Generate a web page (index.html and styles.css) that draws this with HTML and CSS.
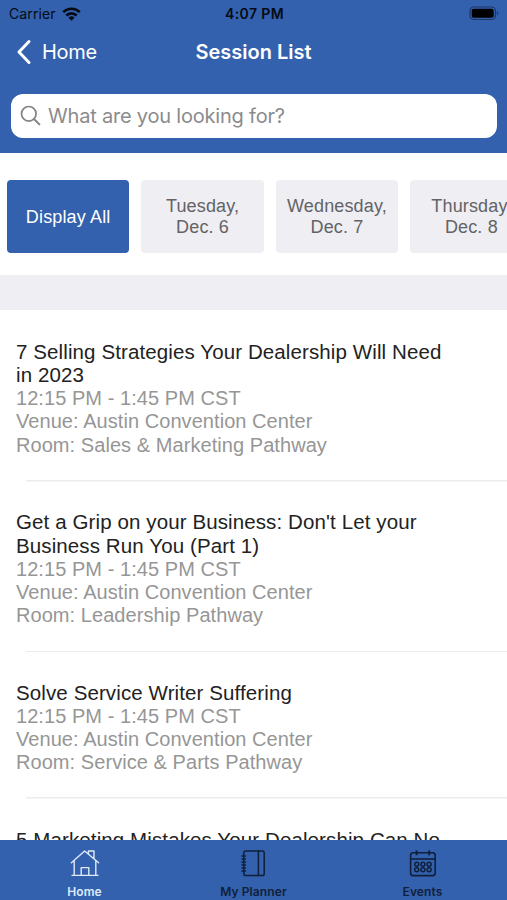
FILE: index.html
```html
<!DOCTYPE html>
<html lang="en">
<head>
    <meta charset="UTF-8">
    <meta name="viewport" content="width=device-width, initial-scale=1.0">
    <title>Session List</title>
    <link rel="stylesheet" href="styles.css">
</head>
<body>
    <div class="app">
        <header class="header">
            <div class="status-bar">
                <div class="carrier">
                    <span class="carrier-name">Carrier</span>
                    <svg class="wifi" width="19" height="14" viewBox="0 0 19 14">
                        <g fill="none" stroke="#050a14" stroke-width="2.6">
                            <path d="M1.2 5.2a11.8 11.8 0 0 1 16.6 0"/>
                            <path d="M4.3 8.5a7.4 7.4 0 0 1 10.4 0"/>
                        </g>
                        <path d="M9.5 13.8l-3-3.1a4.3 4.3 0 0 1 6 0z" fill="#050a14"/>
                    </svg>
                </div>
                <span class="time">4:07 PM</span>
                <svg class="battery" width="31" height="15" viewBox="0 0 31 15">
                    <rect x="1" y="1" width="25.5" height="12.5" rx="3.8" fill="none" stroke="#1c3765" stroke-width="1.2"/>
                    <rect x="2.7" y="2.7" width="22" height="9" rx="2" fill="#000"/>
                    <path d="M28.2 5.2v4c1.6-.5 1.6-3.5 0-4z" fill="#1c3765"/>
                </svg>
            </div>
            <nav class="nav-bar">
                <a class="back">
                    <svg width="16" height="26" viewBox="0 0 16 26">
                        <path d="M13 2.5L3 13l10 10.5" fill="none" stroke="#fff" stroke-width="3" stroke-linecap="round" stroke-linejoin="round"/>
                    </svg>
                    <span class="back-label">Home</span>
                </a>
                <h1 class="title">Session List</h1>
            </nav>
            <div class="search">
                <svg width="22" height="22" viewBox="0 0 22 22" fill="none" stroke="#838386" stroke-width="1.7" stroke-linecap="round">
                    <circle cx="8.8" cy="8.8" r="7.3"/>
                    <path d="M14.2 14.2l5.2 5.2" stroke-width="2"/>
                </svg>
                <span class="placeholder">What are you looking for?</span>
            </div>
        </header>

        <div class="days">
            <button class="day active">Display All</button>
            <button class="day">Tuesday,<br>Dec. 6</button>
            <button class="day">Wednesday,<br>Dec. 7</button>
            <button class="day">Thursday,<br>Dec. 8</button>
        </div>
        <div class="section-band"></div>

        <ul class="sessions">
            <li class="session">
                <h2>7 Selling Strategies Your Dealership Will Need<br>in 2023</h2>
                <p>12:15 PM - 1:45 PM CST</p>
                <p>Venue: Austin Convention Center</p>
                <p>Room: Sales &amp; Marketing Pathway</p>
            </li>
            <li class="session">
                <h2>Get a Grip on your Business: Don't Let your<br>Business Run You (Part 1)</h2>
                <p>12:15 PM - 1:45 PM CST</p>
                <p>Venue: Austin Convention Center</p>
                <p>Room: Leadership Pathway</p>
            </li>
            <li class="session">
                <h2>Solve Service Writer Suffering</h2>
                <p>12:15 PM - 1:45 PM CST</p>
                <p>Venue: Austin Convention Center</p>
                <p>Room: Service &amp; Parts Pathway</p>
            </li>
            <li class="session">
                <h2>5 Marketing Mistakes Your Dealership Can No</h2>
            </li>
        </ul>

        <footer class="tab-bar">
            <a class="tab selected">
                <svg width="30" height="28" viewBox="0 0 30 28" fill="none" stroke="currentColor" stroke-width="1.4" stroke-linejoin="round" stroke-linecap="round">
                    <path d="M1.4 12.8L14.6 1 28.6 12.8M4.2 10.8v14.6M25.8 10.8v14.6M2 25.4h26M18.4 4V1h5.6v7.6M11.2 25.2v-7.6h7.6v7.6"/>
                </svg>
                <span>Home</span>
            </a>
            <a class="tab">
                <svg width="30" height="28" viewBox="0 0 30 28" fill="none" stroke="currentColor" stroke-width="1.5" stroke-linecap="round">
                    <rect x="4.8" y="1" width="20.4" height="24.6" rx="1.8"/>
                    <path d="M19.4 1v24.6M3 6h3.4M3 9h3.4M3 12h3.4M3 15h3.4M3 18h3.4M3 21h3.4"/>
                </svg>
                <span>My Planner</span>
            </a>
            <a class="tab">
                <svg width="30" height="28" viewBox="0 0 30 28" fill="none" stroke="currentColor" stroke-width="1.6">
                    <rect x="2.6" y="2.8" width="24.6" height="22.8" rx="2.6"/>
                    <path d="M2.6 9h24.6"/>
                    <path d="M8.6 .6v4.6M21.2 .6v4.6" stroke-width="2"/>
                    <g stroke-width="1.5">
                        <circle cx="8.7" cy="14.3" r="2"/>
                        <circle cx="14.9" cy="14.3" r="2"/>
                        <circle cx="21.1" cy="14.3" r="2"/>
                        <circle cx="8.7" cy="19.8" r="2"/>
                        <circle cx="14.9" cy="19.8" r="2"/>
                        <circle cx="21.1" cy="19.8" r="2"/>
                    </g>
                </svg>
                <span>Events</span>
            </a>
        </footer>
    </div>
</body>
</html>
```
FILE: styles.css
```css
body {
    margin: 0;
    font-family: "Liberation Sans", Arial, sans-serif;
    background-color: #fff;
}
.app {
    display: flex;
    flex-direction: column;
    height: 100vh;
    overflow: hidden;
}
.header {
    flex: none;
    box-sizing: border-box;
    height: 153px;
    background-color: #3361ad;
    font-family: Inter, sans-serif;
}
.status-bar {
    display: grid;
    grid-template-columns: 1fr auto 1fr;
    align-items: center;
    height: 27px;
    padding: 0 7px 0 9px;
    color: #050a14;
}
.carrier {
    display: flex;
    align-items: center;
    gap: 6px;
}
.carrier-name {
    font-size: 14px;
    letter-spacing: 0.1px;
}
.time {
    font-size: 14px;
    font-weight: 600;
    letter-spacing: 0.4px;
}
.battery {
    justify-self: end;
}
.nav-bar {
    display: grid;
    grid-template-columns: 1fr auto 1fr;
    align-items: center;
    height: 50px;
    padding: 0 16px;
    color: #fff;
}
.back {
    display: flex;
    align-items: center;
    gap: 10px;
}
.back-label {
    font-size: 20px;
    letter-spacing: -0.3px;
}
.title {
    margin: 0;
    font-size: 20px;
    font-weight: 600;
}
.search {
    display: flex;
    align-items: center;
    gap: 6px;
    box-sizing: border-box;
    height: 44px;
    margin: 17px 10px 0 11px;
    padding: 0 9px;
    background-color: #fff;
    border-radius: 12px;
    color: #8b8b8d;
}
.placeholder {
    font-size: 20px;
    letter-spacing: -0.2px;
}
.days {
    flex: none;
    display: flex;
    gap: 12px;
    padding: 27px 0 22px 7px;
    overflow: hidden;
}
.day {
    flex: none;
    width: 122.4px;
    height: 73px;
    padding: 1px 0 0;
    border: none;
    border-radius: 4px;
    background-color: #efeef3;
    color: #636365;
    font-family: inherit;
    font-size: 18px;
    line-height: 21px;
    letter-spacing: 0.15px;
}
.day.active {
    background-color: #3361ad;
    color: #fff;
}
.section-band {
    flex: none;
    height: 35px;
    background-color: #efeef3;
}
.sessions {
    flex: 1;
    min-height: 0;
    margin: 0;
    padding: 1px 0 0;
    overflow: hidden;
    list-style: none;
}
.session {
    padding: 28.6px 16px 24.8px;
    background: linear-gradient(#ececec, #ececec) 26px 100% / 100% 1.5px no-repeat;
}
.session h2 {
    margin: 0;
    color: #222;
    font-size: 20.5px;
    font-weight: normal;
    line-height: 23.8px;
    letter-spacing: 0.11px;
    white-space: nowrap;
}
.session p {
    margin: 0;
    color: #969696;
    font-size: 20px;
    line-height: 23.2px;
    letter-spacing: 0.06px;
    white-space: nowrap;
}
.tab-bar {
    flex: none;
    display: grid;
    grid-template-columns: repeat(3, 1fr);
    height: 60px;
    background-color: #3361ad;
    font-family: Inter, sans-serif;
}
.tab {
    display: flex;
    flex-direction: column;
    align-items: center;
    gap: 5.5px;
    padding-top: 10px;
    color: #10203c;
    font-size: 12px;
    font-weight: 600;
    line-height: 15px;
    letter-spacing: 0.1px;
}
.tab.selected {
    color: #dfe9fa;
}
```
